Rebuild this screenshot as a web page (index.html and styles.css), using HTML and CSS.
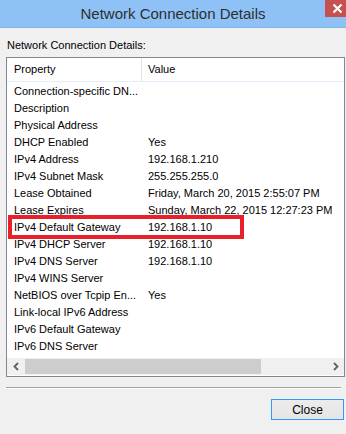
FILE: index.html
```html
<!DOCTYPE html>
<html lang="en">

<head>
    <meta charset="UTF-8">
    <meta name="viewport" content="width=device-width, initial-scale=1.0">
    <title>Network Connection Details</title>
    <link rel="stylesheet" href="styles.css">
</head>

<body>
    <div class="window">
        <div class="titlebar">
            <span class="title">Network Connection Details</span>
            <div class="close-x">
                <svg width="11" height="11" viewBox="0 0 11 11">
                    <path d="M1.5 1.5 L9.5 9.5 M9.5 1.5 L1.5 9.5" stroke="#fff" stroke-width="2.2" fill="none"/>
                </svg>
            </div>
        </div>

        <div class="content">
            <div class="caption">Network Connection Details:</div>

            <div class="listview">
                <div class="list-header">
                    <div class="col-prop">Property</div>
                    <div class="col-value">Value</div>
                </div>
                <div class="rows">
                    <div class="row"><span>Connection-specific DN...</span><span></span></div>
                    <div class="row"><span>Description</span><span></span></div>
                    <div class="row"><span>Physical Address</span><span></span></div>
                    <div class="row"><span>DHCP Enabled</span><span>Yes</span></div>
                    <div class="row"><span>IPv4 Address</span><span>192.168.1.210</span></div>
                    <div class="row"><span>IPv4 Subnet Mask</span><span>255.255.255.0</span></div>
                    <div class="row"><span>Lease Obtained</span><span>Friday, March 20, 2015 2:55:07 PM</span></div>
                    <div class="row"><span>Lease Expires</span><span>Sunday, March 22, 2015 12:27:23 PM</span></div>
                    <div class="row marked"><span>IPv4 Default Gateway</span><span>192.168.1.10</span></div>
                    <div class="row"><span>IPv4 DHCP Server</span><span>192.168.1.10</span></div>
                    <div class="row"><span>IPv4 DNS Server</span><span>192.168.1.10</span></div>
                    <div class="row"><span>IPv4 WINS Server</span><span></span></div>
                    <div class="row"><span>NetBIOS over Tcpip En...</span><span>Yes</span></div>
                    <div class="row"><span>Link-local IPv6 Address</span><span></span></div>
                    <div class="row"><span>IPv6 Default Gateway</span><span></span></div>
                    <div class="row"><span>IPv6 DNS Server</span><span></span></div>
                </div>
                <div class="hscroll">
                    <div class="arrow">
                        <svg width="8" height="9" viewBox="0 0 8 9"><path d="M6 1 L2.5 4.5 L6 8" stroke="#606060" stroke-width="1.8" fill="none"/></svg>
                    </div>
                    <div class="track"><div class="thumb"></div></div>
                    <div class="arrow">
                        <svg width="8" height="9" viewBox="0 0 8 9"><path d="M2 1 L5.5 4.5 L2 8" stroke="#606060" stroke-width="1.8" fill="none"/></svg>
                    </div>
                </div>
            </div>

            <div class="separator"></div>

            <div class="buttons">
                <button class="close-btn">Close</button>
            </div>
        </div>
    </div>
</body>

</html>
```

FILE: styles.css
```css
body {
    margin: 0;
    background-color: #f0f0f0;
    font-family: "Liberation Sans", Arial, sans-serif;
    font-size: 11px;
    color: #000;
}

.window {
    width: 346px;
    height: 434px;
    overflow: hidden;
}

.titlebar {
    position: relative;
    height: 27px;
    background-color: #8ec2f6;
    border-bottom: 1px solid #7eb4ea;
    display: flex;
    align-items: center;
    justify-content: center;
}

.title {
    font-size: 15px;
    color: #2f2f2f;
}

.close-x {
    position: absolute;
    top: 0;
    right: 0;
    width: 21px;
    height: 17px;
    background-color: #c75050;
    display: flex;
    align-items: center;
    justify-content: center;
    padding-left: 4px;
    box-sizing: border-box;
}

.content {
    padding: 10px 1px 0 6px;
}

.caption {
    padding-left: 1px;
    height: 19px;
    line-height: 14px;
}

.listview {
    border: 1px solid #828790;
    background-color: #fff;
    height: 318px;
    display: flex;
    flex-direction: column;
}

.list-header {
    display: flex;
    height: 23px;
    border-bottom: 1px solid #e3eefa;
    background-color: #fff;
}

.col-prop {
    width: 127px;
    padding-left: 7px;
    line-height: 23px;
    border-right: 1px solid #e5e5e5;
}

.col-value {
    padding-left: 6px;
    line-height: 23px;
}

.rows {
    flex: 1;
    padding-top: 1px;
}

.row {
    display: grid;
    grid-template-columns: 134px 1fr;
    height: 17px;
    line-height: 17px;
    padding-left: 7px;
    white-space: nowrap;
}

.row.marked {
    position: relative;
}

.row.marked::after {
    content: "";
    position: absolute;
    left: 1px;
    top: -4px;
    width: 228px;
    height: 16px;
    border: 4px solid #e8202a;
}

.hscroll {
    display: flex;
    height: 17px;
    background-color: #f0f0f0;
    margin-bottom: 1px;
}

.arrow {
    width: 17px;
    display: flex;
    align-items: center;
    justify-content: center;
}

.track {
    flex: 1;
    display: flex;
    align-items: center;
}

.thumb {
    margin-left: 1px;
    width: 236px;
    height: 15px;
    background-color: #cdcdcd;
}

.separator {
    margin: 10px 4px 0 0;
    height: 1px;
    background-color: #a0a0a0;
    border-bottom: 1px solid #fff;
}

.buttons {
    display: flex;
    justify-content: flex-end;
    padding-top: 10px;
}

.close-btn {
    width: 73px;
    height: 21px;
    border: 1px solid #3399ff;
    background: linear-gradient(#ececec, #e5e5e5);
    font-family: "Liberation Sans", Arial, sans-serif;
    font-size: 12px;
    color: #000;
    padding: 0;
    margin-right: 1px;
}
```
